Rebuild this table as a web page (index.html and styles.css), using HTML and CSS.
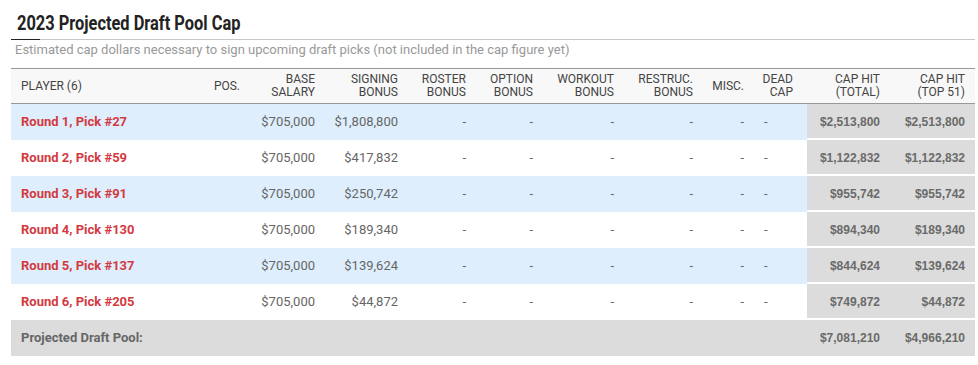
FILE: index.html
```html
<!DOCTYPE html>
<html>
<head>
<meta charset="utf-8">
<link rel="stylesheet" href="styles.css">
</head>
<body>
<div class="wrap">
  <div class="heading">
    <h2 class="title"><span class="title-text">2023 Projected Draft Pool Cap</span></h2>
  </div>
  <p class="subtitle">Estimated cap dollars necessary to sign upcoming draft picks (not included in the cap figure yet)</p>
  <table class="cap-table">
    <colgroup>
      <col class="c-player"><col class="c-pos"><col class="c-base"><col class="c-sign"><col class="c-roster"><col class="c-option"><col class="c-workout"><col class="c-restruc"><col class="c-misc"><col class="c-dead"><col class="c-total"><col class="c-top">
    </colgroup>
    <thead>
      <tr>
        <th class="left">PLAYER (6)</th>
        <th>POS.</th>
        <th>BASE<br>SALARY</th>
        <th>SIGNING<br>BONUS</th>
        <th>ROSTER<br>BONUS</th>
        <th>OPTION<br>BONUS</th>
        <th>WORKOUT<br>BONUS</th>
        <th>RESTRUC.<br>BONUS</th>
        <th>MISC.</th>
        <th class="dead-h">DEAD<br>CAP</th>
        <th>CAP HIT<br>(TOTAL)</th>
        <th>CAP HIT<br>(TOP 51)</th>
      </tr>
    </thead>
    <tbody>
      <tr class="odd">
        <td class="player">Round 1, Pick #27</td><td></td><td>$705,000</td><td>$1,808,800</td><td>-</td><td>-</td><td>-</td><td>-</td><td>-</td><td class="dead">-</td><td class="cap">$2,513,800</td><td class="cap">$2,513,800</td>
      </tr>
      <tr>
        <td class="player">Round 2, Pick #59</td><td></td><td>$705,000</td><td>$417,832</td><td>-</td><td>-</td><td>-</td><td>-</td><td>-</td><td class="dead">-</td><td class="cap">$1,122,832</td><td class="cap">$1,122,832</td>
      </tr>
      <tr class="odd">
        <td class="player">Round 3, Pick #91</td><td></td><td>$705,000</td><td>$250,742</td><td>-</td><td>-</td><td>-</td><td>-</td><td>-</td><td class="dead">-</td><td class="cap">$955,742</td><td class="cap">$955,742</td>
      </tr>
      <tr>
        <td class="player">Round 4, Pick #130</td><td></td><td>$705,000</td><td>$189,340</td><td>-</td><td>-</td><td>-</td><td>-</td><td>-</td><td class="dead">-</td><td class="cap">$894,340</td><td class="cap">$189,340</td>
      </tr>
      <tr class="odd">
        <td class="player">Round 5, Pick #137</td><td></td><td>$705,000</td><td>$139,624</td><td>-</td><td>-</td><td>-</td><td>-</td><td>-</td><td class="dead">-</td><td class="cap">$844,624</td><td class="cap">$139,624</td>
      </tr>
      <tr>
        <td class="player">Round 6, Pick #205</td><td></td><td>$705,000</td><td>$44,872</td><td>-</td><td>-</td><td>-</td><td>-</td><td>-</td><td class="dead">-</td><td class="cap">$749,872</td><td class="cap">$44,872</td>
      </tr>
    </tbody>
    <tfoot>
      <tr>
        <td class="left total-label" colspan="10">Projected Draft Pool:</td>
        <td class="cap">$7,081,210</td>
        <td class="cap">$4,966,210</td>
      </tr>
    </tfoot>
  </table>
</div>
</body>
</html>
```
FILE: styles.css
```css
html, body {
  margin: 0;
  padding: 0;
  background: #ffffff;
}
body {
  font-family: Roboto, "Liberation Sans", sans-serif;
  color: #333;
}
.wrap {
  margin-left: 11px;
  width: 964px;
}
.heading {
  position: relative;
  height: 28px;
  padding-top: 11px;
  border-bottom: 1px solid #c8c8c8;
  box-sizing: content-box;
}
.heading::after {
  content: "";
  position: absolute;
  left: 0;
  bottom: -1px;
  width: 29px;
  height: 1px;
  background: #222;
}
.title {
  margin: 0;
  padding-left: 6px;
  font-size: 20px;
  line-height: 24px;
  font-weight: 700;
  color: #222;
  white-space: nowrap;
}
.title-text {
  display: inline-block;
  transform: scaleX(0.82);
  transform-origin: left center;
}
.subtitle {
  margin: 0;
  padding: 1px 0 0 4px;
  font-size: 13px;
  line-height: 18px;
  color: #999;
}
.cap-table {
  margin-top: 9px;
  width: 964px;
  border-collapse: collapse;
  table-layout: fixed;
  font-size: 13px;
}
.c-player { width: 189px; }
.c-pos { width: 50px; }
.c-base { width: 75px; }
.c-sign { width: 83px; }
.c-roster { width: 68px; }
.c-option { width: 67px; }
.c-workout { width: 81px; }
.c-restruc { width: 79px; }
.c-misc { width: 51px; }
.c-dead { width: 53px; }
.c-total { width: 83px; }
.c-top { width: 85px; }
.cap-table thead tr {
  background: #f8f8f8;
  border-top: 1px solid #999;
  border-bottom: 1px solid #999;
}
.cap-table th {
  height: 34px;
  padding: 0 10px 0 0;
  font-size: 12px;
  line-height: 13px;
  font-weight: 400;
  color: #444;
  text-align: right;
  vertical-align: middle;
}
.cap-table th.left {
  text-align: left;
  padding-left: 10px;
}
.cap-table th.dead-h {
  padding-right: 14px;
}
.cap-table tbody tr,
.cap-table tfoot tr {
  height: 36px;
}
.cap-table td {
  padding: 0 10px 0 0;
  line-height: 16px;
  text-align: right;
  color: #666;
  vertical-align: middle;
  white-space: nowrap;
}
.cap-table tbody tr.odd td {
  background: #deeefd;
}
.cap-table td.player {
  text-align: left;
  padding-left: 10px;
  color: #d33a3f;
  font-weight: 700;
}
.cap-table td.dead {
  text-align: left;
  padding-left: 10px;
}
.cap-table tbody tr td.cap,
.cap-table tbody tr.odd td.cap {
  background: #dcdcdc;
  box-shadow: inset 0 -2px 0 #fff;
  font-family: "Liberation Sans", Arial, sans-serif;
  font-size: 12px;
  font-weight: 700;
  color: #6a6a6a;
}
.cap-table tfoot td {
  background: #dcdcdc;
}
.cap-table tfoot td.total-label {
  text-align: left;
  padding-left: 10px;
  font-weight: 700;
  color: #666;
}
.cap-table tfoot td.cap {
  font-family: "Liberation Sans", Arial, sans-serif;
  font-size: 12px;
  font-weight: 700;
  color: #6a6a6a;
}
```
